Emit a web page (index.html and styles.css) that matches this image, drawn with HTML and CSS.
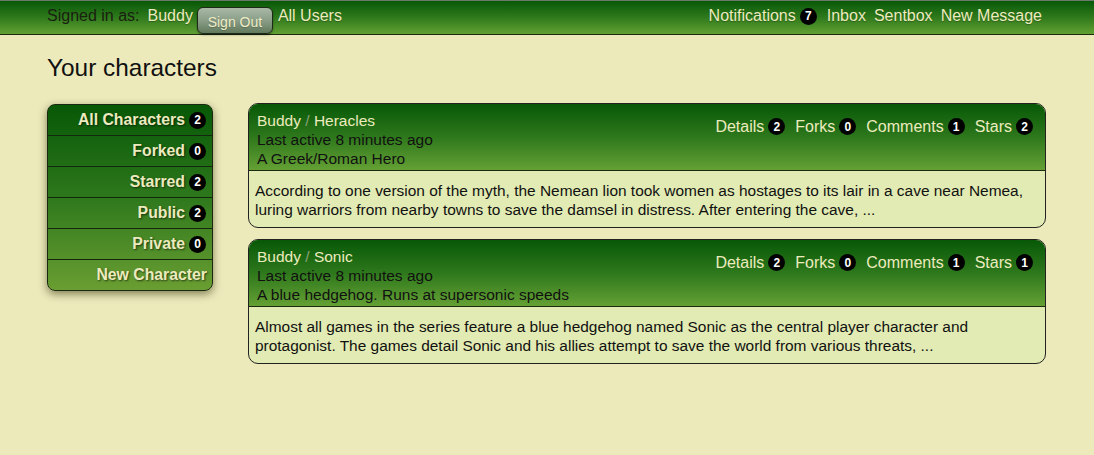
FILE: index.html
```html
<!DOCTYPE html>
<html>
<head>
<meta charset="utf-8">
<link rel="stylesheet" href="styles.css">
</head>
<body>
<div class="topbar">
  <div class="top-left">
    <span class="signed">Signed in as:</span>
    <a class="toplink user">Buddy</a>
    <button class="signout">Sign Out</button>
    <a class="toplink">All Users</a>
  </div>
  <div class="top-right">
    <a class="toplink">Notifications</a><span class="badge">7</span>
    <a class="toplink">Inbox</a>
    <a class="toplink">Sentbox</a>
    <a class="toplink">New Message</a>
  </div>
</div>
<div class="main">
  <h1 class="title">Your characters</h1>
  <div class="content">
    <ul class="sidemenu">
      <li><a>All Characters</a><span class="badge">2</span></li>
      <li><a>Forked</a><span class="badge">0</span></li>
      <li><a>Starred</a><span class="badge">2</span></li>
      <li><a>Public</a><span class="badge">2</span></li>
      <li><a>Private</a><span class="badge">0</span></li>
      <li><a>New Character</a></li>
    </ul>
    <div class="cards">
      <div class="card">
        <div class="card-head">
          <div class="card-info">
            <div class="path"><a>Buddy</a> <span class="sep">/</span> <a>Heracles</a></div>
            <div>Last active 8 minutes ago</div>
            <div>A Greek/Roman Hero</div>
          </div>
          <div class="card-links">
            <a>Details</a><span class="badge">2</span>
            <a>Forks</a><span class="badge">0</span>
            <a>Comments</a><span class="badge">1</span>
            <a>Stars</a><span class="badge">2</span>
          </div>
        </div>
        <div class="card-body">According to one version of the myth, the Nemean lion took women as hostages to its lair in a cave near Nemea, luring warriors from nearby towns to save the damsel in distress. After entering the cave, ...</div>
      </div>
      <div class="card">
        <div class="card-head">
          <div class="card-info">
            <div class="path"><a>Buddy</a> <span class="sep">/</span> <a>Sonic</a></div>
            <div>Last active 8 minutes ago</div>
            <div>A blue hedgehog. Runs at supersonic speeds</div>
          </div>
          <div class="card-links">
            <a>Details</a><span class="badge">2</span>
            <a>Forks</a><span class="badge">0</span>
            <a>Comments</a><span class="badge">1</span>
            <a>Stars</a><span class="badge">1</span>
          </div>
        </div>
        <div class="card-body">Almost all games in the series feature a blue hedgehog named Sonic as the central player character and protagonist. The games detail Sonic and his allies attempt to save the world from various threats, ...</div>
      </div>
    </div>
  </div>
</div>
</body>
</html>
```
FILE: styles.css
```css
html, body {
  margin: 0;
  padding: 0;
}
body {
  background: #ece9bb;
  font-family: "Liberation Sans", Arial, sans-serif;
  font-size: 16px;
  color: #111;
}
a {
  cursor: pointer;
}
.topbar {
  height: 33px;
  border-top: 1px solid #6a7a6a;
  border-bottom: 1px solid #1d2a10;
  background: linear-gradient(to bottom, #085808 0%, #2f7a1c 50%, #62a032 100%);
  display: flex;
  justify-content: space-between;
  align-items: flex-start;
  padding: 0 52px 0 47px;
}
.top-left, .top-right {
  display: flex;
  align-items: center;
  height: 30px;
}
.signed {
  color: #1a2010;
  margin-right: 8px;
}
.toplink {
  color: #ecebbe;
  text-shadow: 0 1px 1px rgba(0,0,0,0.25);
}
.top-right .toplink {
  margin-left: 8px;
}
.top-right .toplink:first-child {
  margin-left: 0;
}
.top-right .badge {
  margin-left: 4px;
  margin-right: 2px;
}
.signout {
  margin: 6px 5px 0 4px;
  height: 27px;
  width: 76px;
  align-self: flex-start;
  border: 1px solid #1e2a18;
  border-radius: 6px;
  background: linear-gradient(to bottom, #a9b9a6 0%, #8a9e88 50%, #61795c 100%);
  color: #eeedc6;
  font-family: "Liberation Sans", Arial, sans-serif;
  font-size: 14px;
  padding: 3px 0 0 0;
  box-shadow: 0 1px 2px rgba(0,0,0,0.4);
  text-shadow: 0 1px 1px rgba(0,0,0,0.2);
}
.badge {
  display: inline-flex;
  align-items: center;
  justify-content: center;
  width: 17px;
  height: 17px;
  border-radius: 50%;
  background: #000;
  color: #fff;
  font-size: 12px;
  font-weight: bold;
  text-shadow: none;
  line-height: 1;
}
.main {
  padding: 0 48px 0 47px;
}
.title {
  margin: 0;
  padding: 19px 0 0 0;
  font-size: 24.4px;
  font-weight: normal;
  line-height: 28px;
  color: #111;
  height: 49px;
}
.content {
  display: flex;
  align-items: flex-start;
  gap: 35px;
}
.sidemenu {
  list-style: none;
  margin: 1px 0 0 0;
  padding: 0;
  width: 164px;
  flex: none;
  border: 1px solid #1a2a10;
  border-radius: 8px;
  overflow: hidden;
  background: linear-gradient(to bottom, #075807 0%, #2e781c 50%, #6a9e32 100%);
  box-shadow: 0 3px 8px rgba(40,40,0,0.55);
}
.sidemenu li {
  height: 30px;
  border-top: 1px solid #142810;
  display: flex;
  align-items: center;
  justify-content: flex-end;
  padding-right: 6px;
  gap: 4px;
  font-weight: bold;
  font-size: 15.8px;
}
.sidemenu li:first-child {
  border-top: none;
}
.sidemenu li a {
  color: #ecebbe;
  text-shadow: 1px 1px 2px rgba(0,0,0,0.6);
}
.sidemenu li:last-child {
  height: 30px;
  padding-right: 5px;
}
.cards {
  flex: 1;
  display: flex;
  flex-direction: column;
  gap: 11px;
}
.card {
  border: 1px solid #222;
  border-radius: 10px;
  overflow: hidden;
  background: #e2ebb3;
}
.card-head {
  display: flex;
  justify-content: space-between;
  align-items: flex-start;
  padding: 7px 12px 2px 8px;
  background: linear-gradient(to bottom, #075807 0%, #2e781c 50%, #64a034 100%);
  border-bottom: 1px solid #1e2a10;
  line-height: 19px;
  color: #111;
}
.card-info {
  font-size: 15.5px;
}
.path a {
  color: #ecebbe;
}
.path .sep {
  color: #8aa07a;
}
.card-links {
  display: flex;
  align-items: center;
  padding-top: 6px;
}
.card-links a {
  color: #ecebbe;
  margin-left: 10px;
}
.card-links a:first-child {
  margin-left: 0;
}
.card-links .badge {
  margin-left: 4px;
}
.card-body {
  padding: 10px 4px 8px 6px;
  line-height: 19px;
  font-size: 15.45px;
  color: #111;
}
```
